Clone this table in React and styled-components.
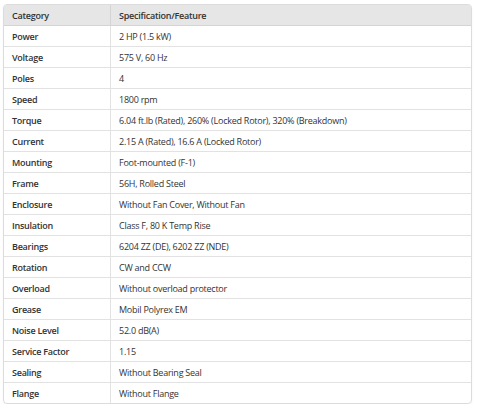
import React from 'react'
import styled, {createGlobalStyle} from 'styled-components'

const GlobalStyle = createGlobalStyle`
  body {
    margin: 0;
    background: #fff;
    font-family: "Open Sans", "Noto Sans", sans-serif;
  }
`

const Wrapper = styled.div`
  padding: 4px 8px 0 3px;
`

const Table = styled.table`
  width: 469px;
  border-collapse: separate;
  border-spacing: 0;
  border: 1px solid #dcdcdc;
  border-radius: 4px;
  overflow: hidden;
  font-size: 9px;
  letter-spacing: -0.25px;
  color: #333;
  box-shadow: 0 1px 2px rgba(0, 0, 0, 0.06);
`

const HeadCell = styled.th`
  background: #e6e6e6;
  text-align: left;
  font-weight: 600;
  height: 20px;
  padding: 0 8px;
  border-bottom: 1px solid #d4d4d4;
  border-left: ${p => (p.first ? 'none' : '1px solid #d4d4d4')};
  width: ${p => (p.first ? '90px' : 'auto')};
`

const Cell = styled.td`
  height: 20px;
  padding: 0 8px;
  font-weight: ${p => (p.label ? 600 : 400)};
  border-top: ${p => (p.top ? 'none' : '1px solid #e2e2e2')};
  border-left: ${p => (p.label ? 'none' : '1px solid #e2e2e2')};
  white-space: nowrap;
`

const specs = [
  ['Power', '2 HP (1.5 kW)'],
  ['Voltage', '575 V, 60 Hz'],
  ['Poles', '4'],
  ['Speed', '1800 rpm'],
  ['Torque', '6.04 ft.lb (Rated), 260% (Locked Rotor), 320% (Breakdown)'],
  ['Current', '2.15 A (Rated), 16.6 A (Locked Rotor)'],
  ['Mounting', 'Foot-mounted (F-1)'],
  ['Frame', '56H, Rolled Steel'],
  ['Enclosure', 'Without Fan Cover, Without Fan'],
  ['Insulation', 'Class F, 80 K Temp Rise'],
  ['Bearings', '6204 ZZ (DE), 6202 ZZ (NDE)'],
  ['Rotation', 'CW and CCW'],
  ['Overload', 'Without overload protector'],
  ['Grease', 'Mobil Polyrex EM'],
  ['Noise Level', '52.0 dB(A)'],
  ['Service Factor', '1.15'],
  ['Sealing', 'Without Bearing Seal'],
  ['Flange', 'Without Flange']
]

export default function App() {
  return (
    <>
      <GlobalStyle />
      <Wrapper>
        <Table>
          <thead>
            <tr>
              <HeadCell first>Category</HeadCell>
              <HeadCell>Specification/Feature</HeadCell>
            </tr>
          </thead>
          <tbody>
            {specs.map(([name, value], i) => (
              <tr key={name}>
                <Cell label top={i === 0}>{name}</Cell>
                <Cell top={i === 0}>{value}</Cell>
              </tr>
            ))}
          </tbody>
        </Table>
      </Wrapper>
    </>
  )
}
